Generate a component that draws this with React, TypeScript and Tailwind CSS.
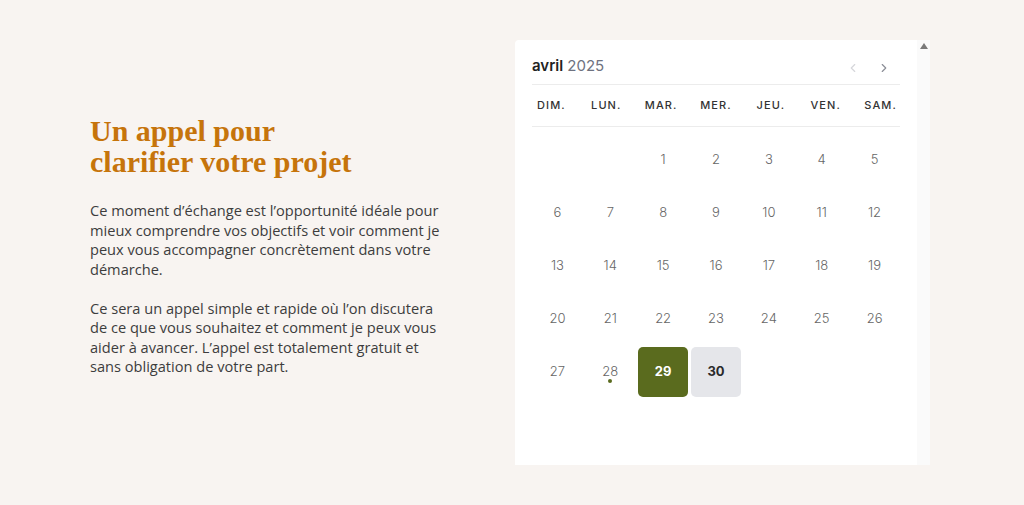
import React from "react";

const weekdays = ["DIM.", "LUN.", "MAR.", "MER.", "JEU.", "VEN.", "SAM."];

function Day({ n }: { n: number | null }) {
  if (n === null) return <div className="h-[50px] w-[50px]" />;
  if (n === 29)
    return (
      <div className="flex h-[50px] w-[50px] items-center justify-center rounded-[5px] bg-[#5a6b1e] text-[13px] font-bold text-white">
        29
      </div>
    );
  if (n === 30)
    return (
      <div className="flex h-[50px] w-[50px] items-center justify-center rounded-[5px] bg-[#e5e6ea] text-[13px] font-bold text-[#2a2a2a]">
        30
      </div>
    );
  return (
    <div className="relative flex h-[50px] w-[50px] items-center justify-center text-[13px] font-light text-[#666]">
      {n}
      {n === 28 && (
        <span className="absolute left-1/2 top-[32px] h-[4px] w-[4px] -translate-x-1/2 rounded-full bg-[#5a6b1e]" />
      )}
    </div>
  );
}

export default function App() {
  const cells: (number | null)[] = [null, null];
  for (let i = 1; i <= 30; i++) cells.push(i);
  return (
    <div className="flex h-[505px] w-full items-start bg-[#f8f4f1] pl-[90px] pt-[40px] font-['Inter',sans-serif]">
      <div className="mt-[75px] w-[425px]">
        <h1 className="font-['Liberation_Serif',serif] text-[30px] font-bold leading-[31px] text-[#c6740b]">
          Un appel pour
          <br />
          clarifier votre projet
        </h1>
        <div className="mt-[24px] w-[356px] font-['Open_Sans',sans-serif] text-[14.6px] leading-[19.5px] text-[#3d3d3d]">
          <p>
            Ce moment d’échange est l’opportunité idéale pour mieux comprendre vos objectifs et voir comment je peux vous
            accompagner concrètement dans votre démarche.
          </p>
          <p className="mt-[19.5px]">
            Ce sera un appel simple et rapide où l’on discutera de ce que vous souhaitez et comment je peux vous aider à
            avancer. L’appel est totalement gratuit et sans obligation de votre part.
          </p>
        </div>
      </div>
      <div className="flex h-[425px] w-[415px]">
        <div className="w-[402px] rounded-tl-[4px] bg-white px-[17px]">
          <div className="flex h-[45px] items-end justify-between border-b border-[#ececec] pb-[8px]">
            <div className="text-[15px] leading-[20px]">
              <span className="font-semibold text-[#222]">avril</span>{" "}
              <span className="text-[#6e7280]">2025</span>
            </div>
            <div className="flex items-center gap-[17px] pb-[1px] pr-[9px]">
              <svg width="14" height="14" viewBox="0 0 24 24" fill="none" stroke="#d6d7db" strokeWidth="2" strokeLinecap="round" strokeLinejoin="round">
                <path d="M15 18l-6-6 6-6" />
              </svg>
              <svg width="14" height="14" viewBox="0 0 24 24" fill="none" stroke="#8b8e97" strokeWidth="2" strokeLinecap="round" strokeLinejoin="round">
                <path d="M9 18l6-6-6-6" />
              </svg>
            </div>
          </div>
          <div className="h-[42px] border-b border-[#ececec]">
            <div className="-mx-[8px] grid h-full grid-cols-7 items-center">
              {weekdays.map((w) => (
                <div key={w} className="text-center text-[11px] font-medium tracking-[0.1em] text-[#333]">
                  {w}
                </div>
              ))}
            </div>
          </div>
          <div className="-mx-[1px] mt-[8px] grid grid-cols-7 gap-y-[3px]">
            {cells.map((n, i) => (
              <div key={i} className="flex justify-center">
                <Day n={n} />
              </div>
            ))}
          </div>
        </div>
        <div className="relative w-[13px] bg-[#fafafa]">
          <div className="absolute left-[3px] top-[3px] h-0 w-0 border-x-[4px] border-b-[6px] border-x-transparent border-b-[#7a7a7a]" />
        </div>
      </div>
    </div>
  );
}
